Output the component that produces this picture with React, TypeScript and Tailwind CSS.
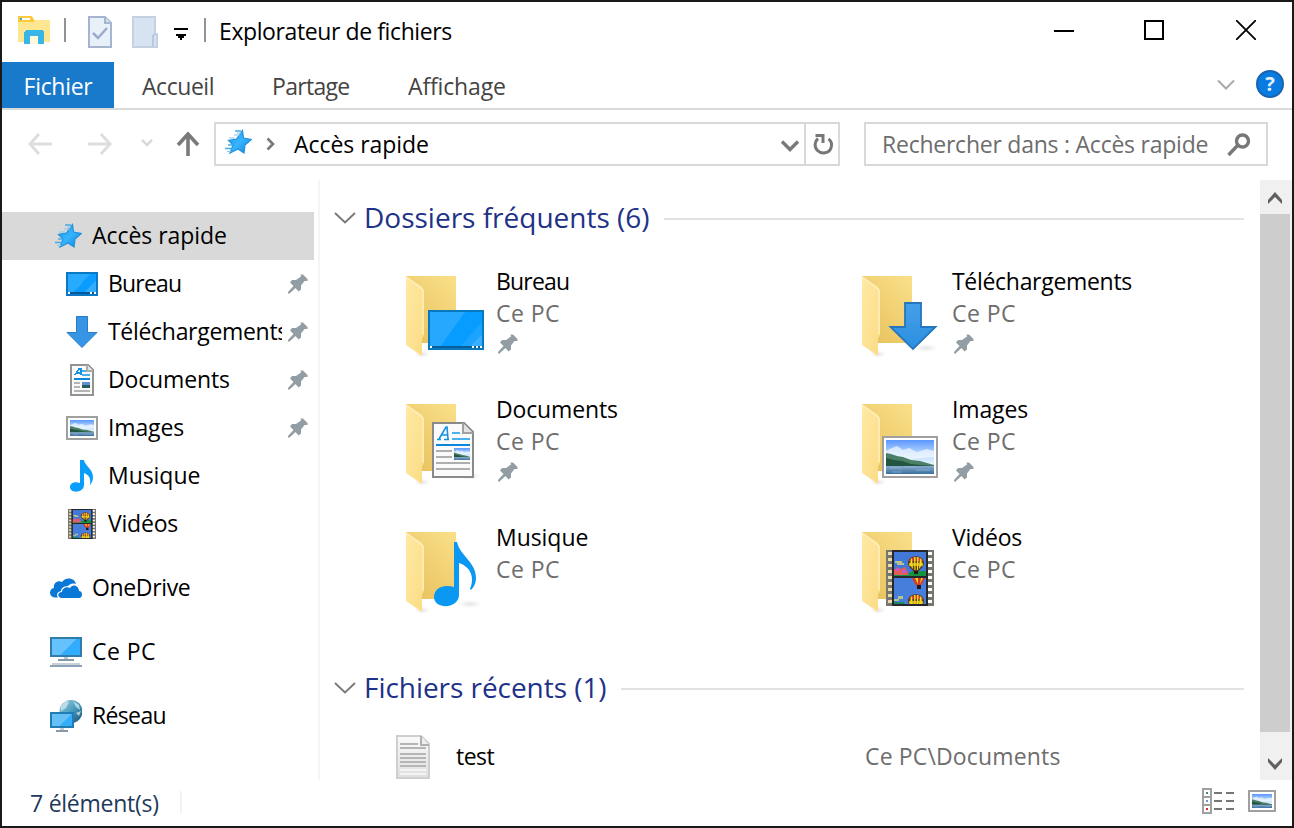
import type { ReactNode } from "react";

function Star() {
  return (
    <svg width="32" height="32" viewBox="0 0 32 32" className="shrink-0">
      <defs>
        <linearGradient id="star" x1="0" y1="0" x2="1" y2="1">
          <stop offset="0" stopColor="#2196e3" />
          <stop offset=".5" stopColor="#36b4ff" />
          <stop offset="1" stopColor="#0d83d6" />
        </linearGradient>
      </defs>
      <path d="M22.500 4.500L23.500 12l8 1.500-6.500 5.500-1 8-6-4-8 4 3-8-4.500-4.500 8-1.500z" fill="url(#star)" stroke="#1f92dc" strokeWidth="1.200" />
      <path d="M15 5h6M8 19h5M5 22.500h7" stroke="#45a9e8" strokeWidth="1.300" />
      <path d="M14 9h6M9 12h6M7 25.500h4M17 7h4" stroke="#8dc8ee" strokeWidth="1.200" />
    </svg>
  );
}

function Pin() {
  return (
    <svg width="20" height="20" viewBox="0 0 20 20" className="shrink-0">
      <path d="M12.500 0.500h2.500l4.500 4.500v2h-3l-3.500 4.500v4l-2.500 2-3-3.500-6 5.500h-1.500v-1.500l5.500-6-3.500-3.500 2-2.500h4l5-3.500z" fill="#929da4" />
    </svg>
  );
}

function DesktopIcon() {
  return (
    <svg width="32" height="24" viewBox="0 0 32 24" shapeRendering="crispEdges">
      <path d="M1 1h30v22H1z" fill="#0a9cff" stroke="#0a78c2" strokeWidth="2" />
      <path d="M2 20V2h22L8 20z" fill="#28aaff" />
      <path d="M18 20L30 8v12z" fill="#32adff" />
      <path d="M2 20h28v2H2z" fill="#07599a" />
      <path d="M2 20h2v2H2zM24 20h2v2h-2zM28 20h2v2h-2z" fill="#fff" />
    </svg>
  );
}

function DownloadIcon() {
  return (
    <svg width="32" height="32" viewBox="0 0 32 32">
      <path d="M10.500 .5h11v16h9.500L16 31.500 1 16.500h9.500z" fill="#3795e6" stroke="#2c7cc4" />
    </svg>
  );
}

function Landscape({ x, y, w, h }: { x: number; y: number; w: number; h: number }) {
  return (
    <svg x={x} y={y} width={w} height={h} viewBox="0 0 48 34" preserveAspectRatio="none">
      <defs>
        <linearGradient id="sky" x1="0" y1="0" x2="0" y2="1">
          <stop offset="0" stopColor="#5b97ff" />
          <stop offset=".4" stopColor="#b9d8fd" />
          <stop offset=".7" stopColor="#e4f2fb" />
        </linearGradient>
        <linearGradient id="lake" x1="0" y1="0" x2="0" y2="1">
          <stop offset="0" stopColor="#86abd0" />
          <stop offset="1" stopColor="#3a6f9f" />
        </linearGradient>
      </defs>
      <path d="M0 0h48v34H0z" fill="url(#sky)" />
      <path d="M0 11l6-3 5-2 6 4 6-2 8 4 10-3 7 2v6l-48 4z" fill="#f4f9ff" opacity=".7" />
      <path d="M0 13l5 1 6 2 6 1 8 3 9 1 14 4v2H0z" fill="#4c8066" />
      <path d="M0 18l8 2 8 1 9 3 10 1 13 1v1H0z" fill="#235641" />
      <path d="M0 26h48v8H0z" fill="url(#lake)" />
      <path d="M4 28h12M18 27h12M30 30h14M6 32h10" stroke="#9fbed8" strokeWidth="1" opacity=".6" />
    </svg>
  );
}

function PictureIcon() {
  return (
    <svg width="32" height="24" viewBox="0 0 32 24">
      <path d="M1 1h30v22H1z" fill="#fff" stroke="#a0a0a0" strokeWidth="2" />
      <Landscape x={4} y={4} w={24} h={16} />
    </svg>
  );
}

function DocumentIcon() {
  return (
    <svg width="24" height="32" viewBox="0 0 24 32" shapeRendering="crispEdges">
      <path d="M1 1h17l5 5v25H1z" fill="#fafafa" stroke="#949494" strokeWidth="2" />
      <path d="M17 1v6h6" fill="#e4e4e4" stroke="#aaa" strokeWidth="1.500" />
      <path d="M5 11l4-6h2v6M7 9h4" stroke="#1593e0" strokeWidth="1.600" fill="none" />
      <path d="M12 7h4M12 11h8" stroke="#4ab0ea" strokeWidth="2" />
      <path d="M4 15h16" stroke="#0a86db" strokeWidth="2" />
      <path d="M4 19h6M4 23h6M4 27h16" stroke="#b4b4b4" strokeWidth="2" />
      <path d="M12 18h8v3h-8z" fill="#5d91cf" />
      <path d="M12 21h8v3h-8z" fill="#285c58" />
    </svg>
  );
}

function MusicIcon() {
  return (
    <svg width="24" height="32" viewBox="0 0 24 32">
      <path d="M10 0h4c1 6 9 9 9 17 0 3-1 6-3 8 1-7-1-10-6-12v12c0 8-14 9-14 2 0-4 5-6 10-4z" fill="#0a9efa" />
    </svg>
  );
}

function Balloon({ x, y }: { x: number; y: number }) {
  return (
    <g transform={`translate(${x} ${y})`}>
      <path d="M0 7C0-2 16-2 16 7c0 4-4 6-6 9H6C4 13 0 11 0 7z" fill="#5a3a1c" />
      <path d="M1 5C2 0 14 0 15 5z" fill="#c8402c" />
      <path d="M3 3l1-1 1 11-3-4zM6 1h1.500v13H6.500zM9 1h1.500L10 14H9zM12 2l1.500 1.500L14 9l-3 4z" fill="#f6dc20" />
      <path d="M1 7h14v3H1z" fill="#f2d51d" opacity=".75" />
      <path d="M6 15h4v3H6z" fill="#241a10" />
    </g>
  );
}

function FilmStrip({ x, y, w, h }: { x: number; y: number; w: number; h: number }) {
  return (
    <svg x={x} y={y} width={w} height={h} viewBox="0 0 48 56" preserveAspectRatio="none">
      <path d="M0 0h48v56H0z" fill="#55544f" />
      <path d="M0 0h6v56H0zM42 0h6v56h-6z" fill="#777770" />
      <path d="M4 2v54" stroke="#eadca8" strokeWidth="4" strokeDasharray="3 3" />
      <path d="M44 2v54" stroke="#fff" strokeWidth="4" strokeDasharray="3 3" />
      <path d="M6 0h36v56H6z" fill="#27282b" />
      <svg x="8" y="2" width="32" height="24" viewBox="0 0 32 24">
        <path d="M0 0h32v24H0z" fill="#4279d8" />
        <path d="M0 20l14 1 6-2h12v5H0z" fill="#139442" />
        <path d="M0 18l3-3 4 2 4-2 4 8H0z" fill="#e45c55" />
        <path d="M2 16h3v3H2zM8 18h4v3H8z" fill="#c05ad0" />
        <path d="M1 9h7v2H1zM3 11h7v2H3z" fill="#b9c48c" />
        <Balloon x={14} y={4} />
      </svg>
      <svg x="8" y="28" width="32" height="26" viewBox="0 0 32 26">
        <path d="M0 0h32v26H0z" fill="#477edb" />
        <path d="M18 0h13l-3 6-4 3-3-3z" fill="#d83a28" />
        <path d="M21 0h3v6zM27 0h2l-3 6z" fill="#f2d51d" />
        <path d="M23 7h4v4h-4z" fill="#201820" />
        <path d="M0 21h5v2H0zM4 18h5v3H4z" fill="#b9c48c" />
        <path d="M0 24h10v2H0z" fill="#188c60" />
        <Balloon x={14} y={16} />
      </svg>
    </svg>
  );
}

function FilmIcon() {
  return (
    <svg width="28" height="30" viewBox="0 0 28 30">
      <FilmStrip x={0} y={0} w={28} h={30} />
    </svg>
  );
}

function OneDriveIcon() {
  return (
    <svg width="32" height="20" viewBox="0 0 32 20">
      <path d="M8 19.500H5C-1.500 19-1.500 11 4 10 3 5 8 2 12 4c4-6 13-4 14 2-4-1-6 0-8 2-5 0-7 3-7 5-4 1-5 4-3 6.500z" fill="#0a78d7" />
      <path d="M12 20c-5 0-5-6 0-6 0-4 5-6 8-4 3-5 9-2 9 3 4 0 4 7 0 7z" fill="#0a78d7" />
    </svg>
  );
}

function ComputerIcon() {
  return (
    <svg width="32" height="30" viewBox="0 0 32 30" shapeRendering="crispEdges">
      <path d="M1 1h30v18H1z" fill="#32adfd" stroke="#327cab" strokeWidth="2" />
      <path d="M2 18V2h24L10 18z" fill="#66c2fd" />
      <path d="M14 20h4v2h-4z" fill="#b8c9d4" />
      <path d="M8 22h16v2H8z" fill="#8798a7" />
      <path d="M2 26h28v2H2z" fill="#c7d1d6" />
      <path d="M0 28h32v2H0z" fill="#8ea1ba" />
    </svg>
  );
}

function NetworkIcon() {
  return (
    <svg width="32" height="32" viewBox="0 0 32 32">
      <defs>
        <linearGradient id="globe" x1="0" y1="0" x2="1" y2="1">
          <stop offset="0" stopColor="#a5cddc" />
          <stop offset=".5" stopColor="#479dbf" />
          <stop offset="1" stopColor="#184d70" />
        </linearGradient>
      </defs>
      <circle cx="21" cy="11.500" r="11.500" fill="url(#globe)" />
      <path d="M11 6l5-5 3 1-3 6-5 3zM23 1l6 4 1 5-4-3zM26 13l5-2-2 5z" fill="#cce5e9" opacity=".8" />
      <g shapeRendering="crispEdges">
        <path d="M1 13h22v14H1z" fill="#35aefa" stroke="#217db4" strokeWidth="2" />
        <path d="M2 26V14h19L9 26z" fill="#65c0f8" />
        <path d="M10 28h4v2h-4z" fill="#c2cdd5" />
        <path d="M6 30h12v2H6z" fill="#8798aa" />
      </g>
    </svg>
  );
}

type FolderKind = "desktop" | "download" | "document" | "picture" | "music" | "video";

function FolderIcon({ kind }: { kind: FolderKind }) {
  return (
    <svg width="84" height="88" viewBox="0 0 84 88" className="shrink-0">
      <defs>
        <linearGradient id="back" x1="1" y1="0" x2="0.2" y2="1">
          <stop offset="0" stopColor="#fae08a" />
          <stop offset="1" stopColor="#e8c25e" />
        </linearGradient>
        <linearGradient id="flap" x1="0" y1="0" x2="1" y2="1">
          <stop offset="0" stopColor="#ffe9a4" />
          <stop offset="1" stopColor="#fbdc85" />
        </linearGradient>
        <linearGradient id="arrow" x1="0" y1="0" x2="0" y2="1">
          <stop offset="0" stopColor="#459fe8" />
          <stop offset="1" stopColor="#2b8fe2" />
        </linearGradient>
        <radialGradient id="shade">
          <stop offset="0" stopColor="#000" stopOpacity=".1" />
          <stop offset="1" stopColor="#000" stopOpacity="0" />
        </radialGradient>
      </defs>
      <ellipse cx="20" cy="82" rx="8" ry="4" fill="url(#shade)" />
      {kind !== "desktop" && <ellipse cx="68" cy="76" rx="12" ry="4" fill="url(#shade)" />}
      <path d="M4 4h50v67H4z" fill="url(#back)" />
      <path d="M4 4l16 11 2 3v45l-2 4v17L4 73z" fill="url(#flap)" />
      <path d="M4 5l15 11 2 3v43" stroke="#ffeebc" strokeWidth="1.500" fill="none" />
      {kind === "desktop" && (
        <g shapeRendering="crispEdges">
          <path d="M27 39h54v38H27z" fill="#079cff" stroke="#0878bf" strokeWidth="2" />
          <path d="M28 75V40h35L38 75z" fill="#27a8ff" />
          <path d="M58 75l22-25v25z" fill="#1aa4ff" />
          <path d="M68 75l12-13v13z" fill="#38afff" />
          <path d="M28 74h52v2H28z" fill="#075e9c" />
          <path d="M28 74h2v2h-2zM70 74h2v2h-2zM74 74h2v2h-2zM78 74h2v2h-2z" fill="#fff" />
        </g>
      )}
      {kind === "download" && (
        <path d="M47 31h16v24h14.500L55 77 32.500 55H47z" fill="url(#arrow)" stroke="#2577bd" strokeWidth="1.800" />
      )}
      {kind === "document" && (
        <g>
          <path d="M31 23h31l9 9v45H31z" fill="#fafafa" stroke="#8a8a8a" strokeWidth="2" />
          <path d="M61 23v10h10" fill="#e2e2e2" stroke="#a1a1a1" strokeWidth="2" />
          <path d="M35 39.500h4M42 39.500h5M37 39l7-12h1l1 12M39 35h6" stroke="#1593e0" strokeWidth="1.600" fill="none" />
          <g shapeRendering="crispEdges">
            <path d="M50 33h8M50 39h18" stroke="#49b3ee" strokeWidth="2" />
            <path d="M34 45h34" stroke="#0a86db" strokeWidth="2" />
            <path d="M34 51h16M34 57h16M34 63h34M34 69h34" stroke="#aeaeae" strokeWidth="2" />
          </g>
          <Landscape x={52} y={48} w={16} h={12} />
        </g>
      )}
      {kind === "picture" && (
        <g>
          <path d="M25 37h54v40H25z" fill="#fff" stroke="#a0a0a0" strokeWidth="2" />
          <Landscape x={28} y={40} w={48} h={34} />
        </g>
      )}
      {kind === "music" && (
        <path d="M52 14h3c3 14 19 20 19 36 0 5-2 9-5 12l-1-1c5-11 1-22-11-26v32c0 14-25 15-25 2 0-10 11-13 20-10z" fill="#0a98f2" />
      )}
      {kind === "video" && <FilmStrip x={28} y={22} w={48} h={56} />}
    </svg>
  );
}

function TreeRow({ icon, label, level = 0, pinned, selected }: { icon: ReactNode; label: ReactNode; level?: number; pinned?: boolean; selected?: boolean }) {
  return (
    <div className={`flex h-12 w-[312px] shrink-0 items-center pr-1.5 ${level ? "pl-16" : "pl-12"} ${selected ? "bg-[#d9d9d9]" : ""}`}>
      <div className="flex w-8 shrink-0 justify-center">{icon}</div>
      <div className="mb-0.5 ml-2.5 min-w-0 flex-1 overflow-hidden whitespace-nowrap">{label}</div>
      {pinned && <div className="ml-1.5"><Pin /></div>}
    </div>
  );
}

function FolderItem({ kind, label, pinned }: { kind: FolderKind; label: ReactNode; pinned?: boolean }) {
  return (
    <div className="flex h-32">
      <FolderIcon kind={kind} />
      <div className="ml-2.5 flex flex-col leading-8 whitespace-nowrap">
        <div className="-mt-[7px]">{label}</div>
        <div className="tracking-[0.45px] text-[#6d6d6d]">Ce PC</div>
        {pinned && <div className="mt-[5px] ml-0.5"><Pin /></div>}
      </div>
    </div>
  );
}

function SectionHeader({ children }: { children: ReactNode }) {
  return (
    <div className="flex h-10 items-center pr-4 pl-3.5">
      <svg width="22" height="12" viewBox="0 0 22 12" className="mr-2 shrink-0">
        <path d="M1 1l10 9.500L21 1" fill="none" stroke="#777" strokeWidth="1.800" />
      </svg>
      <h2 className="mb-0.5 text-[28px] leading-9 whitespace-nowrap text-[#1e3287]">{children}</h2>
      <div className="mt-0.5 ml-3.5 h-0.5 flex-1 bg-[#e2e2e2]" />
    </div>
  );
}

export default function App() {
  return (
    <div className="flex h-[828px] w-[1294px] flex-col overflow-hidden border-2 border-[#19191a] bg-white font-['Open_Sans','Noto_Sans',sans-serif] text-[23px] leading-8 text-black">
      <header className="flex h-[60px] shrink-0 items-center">
        <svg width="32" height="28" viewBox="0 0 32 28" shapeRendering="crispEdges" className="mb-1 ml-4 shrink-0">
          <path d="M0 0h14l2 4h16v22H0z" fill="#ffe792" />
          <path d="M0 0h14l2 4v2H0z" fill="#fbcb3d" />
          <path d="M2 2h10v2H2z" fill="#fff" />
          <path d="M2 2h2v2H2z" fill="#38a9dd" />
          <path d="M6 28V16l2-2h16l2 2v12h-6v-8h-8v8z" fill="#39b6e8" />
          <path d="M12 20h8v8h-8z" fill="#fff8db" />
        </svg>
        <div className="mb-1 ml-3.5 h-6 w-0.5 bg-[#929292]" />
        <svg width="24" height="32" viewBox="0 0 24 32" className="ml-[22px] shrink-0">
          <path d="M1 1h16l6 6v24H1z" fill="#e8f0fa" stroke="#a5b5cf" strokeWidth="2" />
          <path d="M17 1v6h6" fill="#d5dfed" stroke="#a5b5cf" strokeWidth="2" />
          <path d="M5 17l5 5 9-10" fill="none" stroke="#9babc8" strokeWidth="2.500" />
        </svg>
        <svg width="26" height="32" viewBox="0 0 26 32" className="ml-5 shrink-0">
          <path d="M1 1h22v17h2v13H1z" fill="#d8e3f2" stroke="#c4d1e5" strokeWidth="2" />
          <path d="M21 31V20l2-2" fill="none" stroke="#b9c8df" strokeWidth="2" />
        </svg>
        <svg width="14" height="12" viewBox="0 0 14 12" shapeRendering="crispEdges" className="mt-1 ml-4 shrink-0">
          <path d="M0 0h14v2H0zM2 6h10v2h-2v2H8v2H6v-2H4V8H2z" />
        </svg>
        <div className="mb-1 ml-4 h-6 w-0.5 bg-[#929292]" />
        <h1 className="mb-0.5 ml-[13px] tracking-[-0.4px] whitespace-nowrap">Explorateur de fichiers</h1>
        <div className="mb-1 ml-auto flex items-center pr-9">
          <svg width="20" height="20" viewBox="0 0 20 20" shapeRendering="crispEdges"><path d="M0 10h20v2H0z" /></svg>
          <svg width="20" height="20" viewBox="0 0 20 20" shapeRendering="crispEdges" className="ml-[70px]"><path d="M1 1h18v18H1z" fill="none" stroke="#000" strokeWidth="2" /></svg>
          <svg width="20" height="20" viewBox="0 0 20 20" className="ml-[72px]"><path d="M0 0l20 20M20 0L0 20" stroke="#000" strokeWidth="1.800" /></svg>
        </div>
      </header>

      <nav className="flex h-12 shrink-0 items-center border-b-2 border-[#dadada] whitespace-nowrap text-[#444]">
        <div className="flex h-[46px] w-28 items-center justify-center bg-[#1979ca] pt-0.5 tracking-[-0.3px] text-white">Fichier</div>
        <div className="ml-7 w-[130px] pt-0.5 tracking-[-0.45px]">Accueil</div>
        <div className="w-[136px] pt-0.5 tracking-[-0.7px]">Partage</div>
        <div className="pt-0.5 tracking-[-0.15px]">Affichage</div>
        <svg width="18" height="12" viewBox="0 0 18 12" className="mr-px ml-auto"><path d="M1 1.500l8 8 8-8" fill="none" stroke="#aaa" strokeWidth="2" /></svg>
        <div className="mr-2 mb-0.5 ml-5 flex size-7 items-center justify-center rounded-full border-2 border-[#1765b0] bg-[#0a7be0] text-[20px] leading-none font-bold text-[#e4f2ff]">?</div>
      </nav>

      <div className="flex h-[70px] shrink-0 items-center pb-0.5 whitespace-nowrap">
        <svg width="24" height="22" viewBox="0 0 24 22" className="ml-[26px] shrink-0"><path d="M24 11H2M11 1L2 11l9 10" fill="none" stroke="#dedede" strokeWidth="3" /></svg>
        <svg width="24" height="22" viewBox="0 0 24 22" className="ml-9 shrink-0"><path d="M0 11h22M13 1l9 10-9 10" fill="none" stroke="#dedede" strokeWidth="3" /></svg>
        <svg width="12" height="8" viewBox="0 0 12 8" className="mb-0.5 ml-[29px] shrink-0"><path d="M1 1l5 5 5-5" fill="none" stroke="#dadada" strokeWidth="2.500" /></svg>
        <svg width="24" height="24" viewBox="0 0 24 24" className="ml-[23px] shrink-0"><path d="M12 24V3M2 13L12 2l10 11" fill="none" stroke="#7a7a7a" strokeWidth="3.600" /></svg>
        <div className="ml-[14px] flex h-11 w-[626px] items-center border-2 border-[#d9d9d9]">
          <div className="mb-1 ml-1"><Star /></div>
          <svg width="9" height="14" viewBox="0 0 9 14" className="ml-[14px]"><path d="M1.500 1.500L7 7l-5.500 5.500" fill="none" stroke="#777" strokeWidth="2.600" /></svg>
          <span className="ml-[19px] tracking-[-0.05px]">Accès rapide</span>
          <svg width="20" height="12" viewBox="0 0 20 12" className="mt-1 ml-auto"><path d="M2 1.500l8 8 8-8" fill="none" stroke="#7a7a7a" strokeWidth="3.400" /></svg>
          <div className="ml-1 flex h-10 w-[34px] items-center justify-center border-l-2 border-[#d9d9d9] pl-1">
            <svg width="22" height="24" viewBox="0 0 22 24"><path d="M5 6.500C1.500 9.500 1 15 4.500 18.500c4 4 11.500 3 13.500-2.500 1.200-3.500.2-7-2.500-9.200M2.500 3.500H10v7.500" fill="none" stroke="#777" strokeWidth="3" /></svg>
          </div>
        </div>
        <div className="ml-6 flex h-11 w-[404px] items-center border-2 border-[#d9d9d9] pl-4 text-[#6d6d6d]">
          <span className="tracking-[-0.24px]">Rechercher dans : Accès rapide</span>
          <svg width="24" height="24" viewBox="0 0 24 24" className="mt-0.5 mr-[15px] ml-auto"><circle cx="15.500" cy="8" r="6" fill="none" stroke="#777" strokeWidth="3.400" /><path d="M11 12L1.500 22" stroke="#777" strokeWidth="3.400" /></svg>
        </div>
      </div>

      <main className="flex h-[600px] shrink-0">
        <aside className="flex w-[318px] shrink-0 flex-col gap-4 overflow-hidden border-r-2 border-[#f5f5f5] pt-8">
          <div>
            <TreeRow selected icon={<Star />} label={<span className="tracking-[-0.05px]">Accès rapide</span>} />
            <TreeRow level={1} pinned icon={<DesktopIcon />} label={<span className="tracking-[-0.8px]">Bureau</span>} />
            <TreeRow level={1} pinned icon={<DownloadIcon />} label={<span className="tracking-[-0.3px]">Téléchargements</span>} />
            <TreeRow level={1} pinned icon={<DocumentIcon />} label={<span className="tracking-[-0.15px]">Documents</span>} />
            <TreeRow level={1} pinned icon={<PictureIcon />} label={<span className="tracking-[-0.15px]">Images</span>} />
            <TreeRow level={1} icon={<MusicIcon />} label={<span className="tracking-[-0.05px]">Musique</span>} />
            <TreeRow level={1} icon={<FilmIcon />} label={<span className="tracking-[-0.2px]">Vidéos</span>} />
          </div>
          <TreeRow icon={<OneDriveIcon />} label={<span className="tracking-[-0.35px]">OneDrive</span>} />
          <TreeRow icon={<ComputerIcon />} label={<span className="tracking-[0.45px]">Ce PC</span>} />
          <TreeRow icon={<NetworkIcon />} label={<span className="tracking-[-0.65px]">Réseau</span>} />
        </aside>

        <section className="flex min-w-0 flex-1 flex-col overflow-hidden pt-[18px]">
          <SectionHeader><span>Dossiers fréquents (6)</span></SectionHeader>
          <div className="mt-[34px] grid grid-cols-[456px_1fr] pl-[82px]">
            <FolderItem kind="desktop" pinned label={<span className="tracking-[-0.8px]">Bureau</span>} />
            <FolderItem kind="download" pinned label={<span className="tracking-[-0.3px]">Téléchargements</span>} />
            <FolderItem kind="document" pinned label={<span className="tracking-[-0.15px]">Documents</span>} />
            <FolderItem kind="picture" pinned label={<span className="tracking-[-0.15px]">Images</span>} />
            <FolderItem kind="music" label={<span className="tracking-[-0.05px]">Musique</span>} />
            <FolderItem kind="video" label={<span className="tracking-[-0.2px]">Vidéos</span>} />
          </div>
          <div className="mt-3"><SectionHeader><span className="tracking-[-0.05px]">Fichiers récents (1)</span></SectionHeader></div>
          <div className="mt-[27px] flex h-[46px] items-center pl-[76px] whitespace-nowrap">
            <svg width="34" height="44" viewBox="0 0 34 44" className="shrink-0">
              <defs>
                <linearGradient id="sheet" x1="0" y1="0" x2="0" y2="1">
                  <stop offset="0" stopColor="#fafafa" />
                  <stop offset="1" stopColor="#dfdfdf" />
                </linearGradient>
              </defs>
              <path d="M1 1h24l8 8v34H1z" fill="url(#sheet)" stroke="#cfcfcf" strokeWidth="2" />
              <path d="M25 1v9h8" fill="#efefef" stroke="#b0b0b0" strokeWidth="2" />
              <path d="M4 9h18M4 13h26M4 19h26M4 23h26M4 27h26M4 31h26" stroke="#b5b5b5" strokeWidth="1.800" />
              <path d="M4 35h26M4 39h26" stroke="#f4f4f4" strokeWidth="2" />
            </svg>
            <span className="mb-0.5 ml-[26px] w-[408px] tracking-[-0.5px]">test</span>
            <span className="mb-0.5 ml-px tracking-[0.15px] text-[#6d6d6d]">Ce PC\Documents</span>
          </div>
        </section>

        <div className="flex w-8 shrink-0 flex-col bg-[#f0f0f0]">
          <div className="flex h-[34px] items-center justify-center pt-0.5 pr-0.5">
            <svg width="14" height="12" viewBox="0 0 14 12"><path d="M0 8L7 0l7 8v4l-7-7-7 7z" fill="#606060" /></svg>
          </div>
          <div className="h-[518px] w-[30px] bg-[#cdcdcd]" />
          <div className="flex flex-1 items-center justify-center pt-4 pr-0.5">
            <svg width="14" height="12" viewBox="0 0 14 12"><path d="M0 4l7 8 7-8V0L7 7 0 0z" fill="#606060" /></svg>
          </div>
        </div>
      </main>

      <footer className="flex h-11 shrink-0 items-center text-[#1e395b]">
        <span className="ml-7 w-[150px] pt-0.5 tracking-[-0.25px] whitespace-nowrap">7 élément(s)</span>
        <div className="h-[22px] w-0.5 bg-[#f2f2f2]" />
        <svg width="32" height="26" viewBox="0 0 32 26" shapeRendering="crispEdges" className="mb-0.5 ml-auto">
          <path d="M1 1h8v24H1zM1 9h8M1 17h8" fill="#fff" stroke="#a0a0a0" strokeWidth="2" />
          <path d="M4 4h2v2H4z" fill="#4a8870" />
          <path d="M4 12h2v2H4z" fill="#5b98ed" />
          <path d="M4 20h2v2H4z" fill="#d42c2c" />
          <path d="M12 4h8v2h-8zM24 4h8v2h-8zM12 12h8v2h-8zM24 12h8v2h-8zM12 20h8v2h-8zM24 20h8v2h-8z" fill="#777" />
        </svg>
        <svg width="28" height="22" viewBox="0 0 28 22" className="mr-4 mb-0.5 ml-3.5">
          <path d="M1 1h26v20H1z" fill="#fff" stroke="#a0a0a0" strokeWidth="2" />
          <Landscape x={4} y={4} w={20} h={14} />
        </svg>
      </footer>
    </div>
  );
}
